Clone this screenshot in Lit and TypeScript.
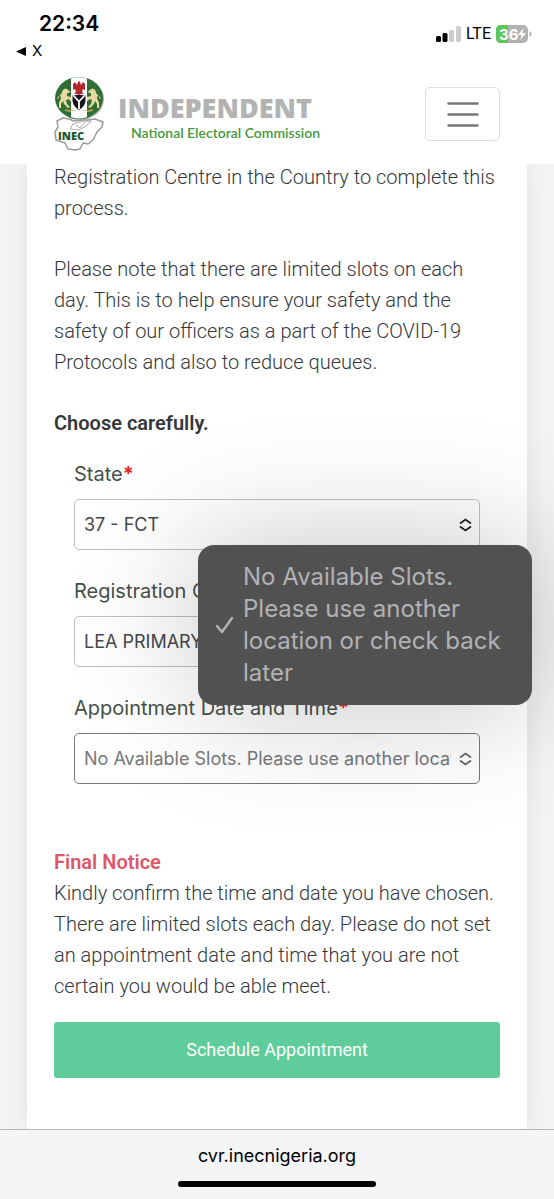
import { LitElement, html, css, svg } from "lit";
import { customElement, property } from "lit/decorators.js";

const crest = svg`
  <ellipse cx="26" cy="22" rx="24" ry="21" fill="#aab0aa"/>
  <ellipse cx="25" cy="21" rx="24" ry="21" fill="#2f6f35"/>
  <path d="M17 1.500Q25 -1 33 1.500V40Q25 43 17 40Z" fill="#fff"/>
  <path d="M19 7l2-2 2 3 1-3 1-1 1 1 1 3 2-3 2 2 0 6-2-1-1 3 2 2-3 0-2 1-2-1-3 0 2-2-1-3-2 1z" fill="#b3262c"/>
  <path d="M18.500 18h13v6q-1 6-6.500 9q-5.500-3-6.500-9z" fill="#15171c"/>
  <path d="M19 18l6 6.500 6-6.500M25 24v8" fill="none" stroke="#fff" stroke-width="1.800"/>
  <path d="M8 16q0-4 4-4.500l4 3-1 1.500-2 0 0 3 4 1 1 4-2 0-1-2-3 1 1 4 3 3-2 1-4-4-1-3-2 3 0 4-2 0 0-5 2-5-1-3-2 4-1-1zM42 16q0-4-4-4.500l-4 3 1 1.500 2 0 0 3-4 1-1 4 2 0 1-2 3 1-1 4-3 3 2 1 4-4 1-3 2 3 0 4 2 0 0-5-2-5 1-3 2 4 1-1z" fill="#e9d9a0"/>
  <path d="M11 33q14 4 28 0" fill="none" stroke="#a99a4c" stroke-width="2"/>
  <rect x="17" y="34" width="16" height="6" fill="#fff"/>
  <path d="M3 44l6-3 6 1 5 2 8-1 6 0 7-1 8 3-1 5-5 5-4 8-5 4-5-1-3 6-5 1-7-1-3-6-9-3-1-8 3-5z" fill="#fff" stroke="#9a9a9a" stroke-width="1.500" stroke-linejoin="round"/>
  <path d="M16 52l3-5 10-3 8 0-5 5-7 4zM22 48l4 3 5-6" fill="none" stroke="#aaa" stroke-width="1"/>
`;

const styles = css`
  :host {
    --body: Roboto, sans-serif;
    display: flex;
    flex-direction: column;
    min-height: 100vh;
    background: #f2f4f6;
    color: #35373b;
    font-family: var(--body);
    overflow: hidden;
  }
  * { box-sizing: border-box; }
  .top { position: relative; z-index: 1; background: #fff; }
  .status {
    display: flex;
    justify-content: space-between;
    height: 64px;
    padding: 10px 22px 0 16px;
    font-family: Inter, sans-serif;
    color: #000;
  }
  .clock { display: block; padding-left: 23px; font-size: 21px; font-weight: 600; line-height: 28px; }
  .back { display: flex; align-items: center; gap: 6px; font-size: 15px; line-height: 26px; color: #000; text-decoration: none; }
  .signals { display: flex; align-items: center; gap: 5px; height: 24px; margin-top: 12px; font: 400 16px/24px Roboto, sans-serif; }
  .brandbar { display: flex; justify-content: space-between; align-items: center; height: 100px; padding: 0 54px 0 54px; }
  .brand { display: flex; align-items: center; gap: 13px; text-decoration: none; }
  .names { display: flex; flex-direction: column; padding-top: 8px; }
  .name { font: 800 27px/30px "Open Sans", sans-serif; color: #b3b3b3; }
  .sub { padding-left: 13px; font: 600 14px/20px Lato, sans-serif; color: #46993c; }
  .menu {
    display: grid; place-items: center; width: 75px; height: 54px; padding: 0;
    background: #fff; border: 1px solid #dedede; border-radius: 5px;
  }
  .card {
    flex: 1;
    margin: -2px 27px 0;
    padding: 0 27px 51px;
    background: #fff;
    box-shadow: 0 0 24px rgba(0, 0, 0, 0.08);
  }
  p { margin: 0 0 30px; font-size: 20px; font-weight: 300; line-height: 31px; }
  .strong { margin-bottom: 23px; font-weight: 600; }
  form { position: relative; display: grid; gap: 29px; padding: 0 20px; }
  .notice { margin: 63px 0 20px; }
  .title { display: block; font-weight: 600; color: #dc5767; }
  .submit {
    width: 100%; height: 56px; border: 0; border-radius: 3px;
    background: #5fcd9b; color: #fff; font: 400 18px/24px var(--body);
  }
  .popup {
    position: absolute;
    top: 83px;
    right: -32px;
    display: flex;
    align-items: center;
    gap: 9px;
    width: 334px;
    padding: 16px 20px 16px 17px;
    border-radius: 16px;
    background: #515151;
    color: #b2b2b4;
    font: 400 24px/32px Inter, sans-serif;
    box-shadow: 0 0 128px rgba(0, 0, 0, 0.24);
  }
  .popup svg { flex: none; }
  .address {
    display: flex; flex-direction: column; align-items: center; gap: 13px;
    position: relative;
    height: 70px; padding-top: 13px;
    background: #f4f5f7; border-top: 1px solid #b4b5b8;
  }
  .address a { color: #000; font: 400 18px/25px Inter, sans-serif; text-decoration: none; }
  .home { width: 198px; height: 6px; border-radius: 3px; background: #000; }
`;

@customElement("field-select")
class FieldSelect extends LitElement {
  @property() label = "";
  @property() value = "";
  @property({ type: Boolean }) active = false;

  static styles = css`
    :host { display: block; min-width: 0; }
    label { display: block; margin-bottom: 13px; font: 400 20px/24px Inter, sans-serif; color: #465049; }
    .req { color: #e32b2b; font-weight: 700; }
    .box { display: grid; align-items: center; }
    select {
      grid-area: 1 / 1; width: 100%; height: 51px; padding: 0 28px 0 9px;
      appearance: none; background: rgba(255, 255, 255, 0.3); color: #45484b;
      border: 1px solid #bfc0c6; border-radius: 5px;
      font: 400 18px/24px Inter, sans-serif;
    }
    .active { border-color: #77797c; color: #77797c; }
    svg { grid-area: 1 / 1; justify-self: end; margin-right: 8px; pointer-events: none; }
  `;

  render() {
    return html`
      <label for="s">${this.label}<span class="req">*</span></label>
      <div class="box">
        <select id="s" class=${this.active ? "active" : ""}><option>${this.value}</option></select>
        <svg width="13" height="14" viewBox="0 0 13 14" fill="none" stroke=${this.active ? "#666" : "#222"} stroke-width="1.800">
          <path d="M1 5.500L6.500 1.500 12 5.500M1 8.500L6.500 12.500 12 8.500"/>
        </svg>
      </div>`;
  }
}

@customElement("app-root")
class AppRoot extends LitElement {
  static styles = styles;

  render() {
    return html`
      <header class="top">
        <div class="status">
          <div>
            <time class="clock">22:34</time>
            <a class="back" href="#">
              <svg width="10" height="9" viewBox="0 0 10 9"><path d="M0 4.500L10 0V9Z"/></svg>X
            </a>
          </div>
          <div class="signals">
            <svg width="25" height="16" viewBox="0 0 25 16">
              <rect y="10" width="5" height="6" rx="1.500"/>
              <rect x="6.500" y="7" width="5" height="9" rx="1.500"/>
              <rect x="13" y="4" width="5" height="12" rx="1.500" fill="#ccc"/>
              <rect x="20" y="0" width="5" height="16" rx="1.500" fill="#ccc"/>
            </svg>
            <span>LTE</span>
            <svg width="36" height="18" viewBox="0 0 36 18">
              <rect width="32" height="18" rx="5" fill="#b2b2b2"/>
              <path d="M5 0H12V18H5Q0 18 0 13V5Q0 0 5 0Z" fill="#5bc75c"/>
              <path d="M33.500 6Q35.500 7 35.500 9T33.500 12Z" fill="#b2b2b2"/>
              <text x="3" y="14.500" font-family="Inter, sans-serif" font-size="15" font-weight="700" fill="#fff">36</text>
              <path d="M27.500 3L22 10H25.500L24.500 15 30 8H26.500Z" fill="#fff"/>
            </svg>
          </div>
        </div>
        <div class="brandbar">
          <a class="brand" href="#" aria-label="INEC home">
            <svg width="51" height="74" viewBox="0 0 51 74">
              ${crest}
              <text x="4" y="63" font-family="Open Sans, sans-serif" font-size="11" font-weight="800" fill="#23562b">INEC</text>
            </svg>
            <span class="names">
              <span class="name">INDEPENDENT</span>
              <span class="sub">National Electoral Commission</span>
            </span>
          </a>
          <button class="menu" aria-label="Menu">
            <svg width="32" height="25" viewBox="0 0 32 25" stroke="#777" stroke-width="2.500" stroke-linecap="round">
              <path d="M1.500 1.500H30.500M1.500 12.500H30.500M1.500 23.500H30.500"/>
            </svg>
          </button>
        </div>
      </header>

      <main class="card">
        <p>Registration Centre in the Country to complete this process.</p>
        <p>Please note that there are limited slots on each day. This is to help ensure your safety and the safety of our officers as a part of the COVID-19 Protocols and also to reduce queues.</p>
        <p class="strong">Choose carefully.</p>
        <form>
          <field-select label="State" value="37 - FCT"></field-select>
          <field-select label="Registration Centre" value="LEA PRIMARY SCHOOL"></field-select>
          <field-select label="Appointment Date and Time" value="No Available Slots. Please use another location or check back later" active></field-select>
          <div class="popup" role="listbox">
            <svg width="19" height="18" viewBox="0 0 19 18" fill="none" stroke="#b2b2b4" stroke-width="2.500" stroke-linecap="round" stroke-linejoin="round">
              <path d="M2 10L7 16 17 2"/>
            </svg>
            <span role="option" aria-selected="true">No Available Slots. Please use another location or check back later</span>
          </div>
        </form>
        <p class="notice"><strong class="title">Final Notice</strong>Kindly confirm the time and date you have chosen. There are limited slots each day. Please do not set an appointment date and time that you are not certain you would be able meet.</p>
        <button class="submit">Schedule Appointment</button>
      </main>

      <footer class="address">
        <a href="#">cvr.inecnigeria.org</a>
        <div class="home"></div>
      </footer>
    `;
  }
}
